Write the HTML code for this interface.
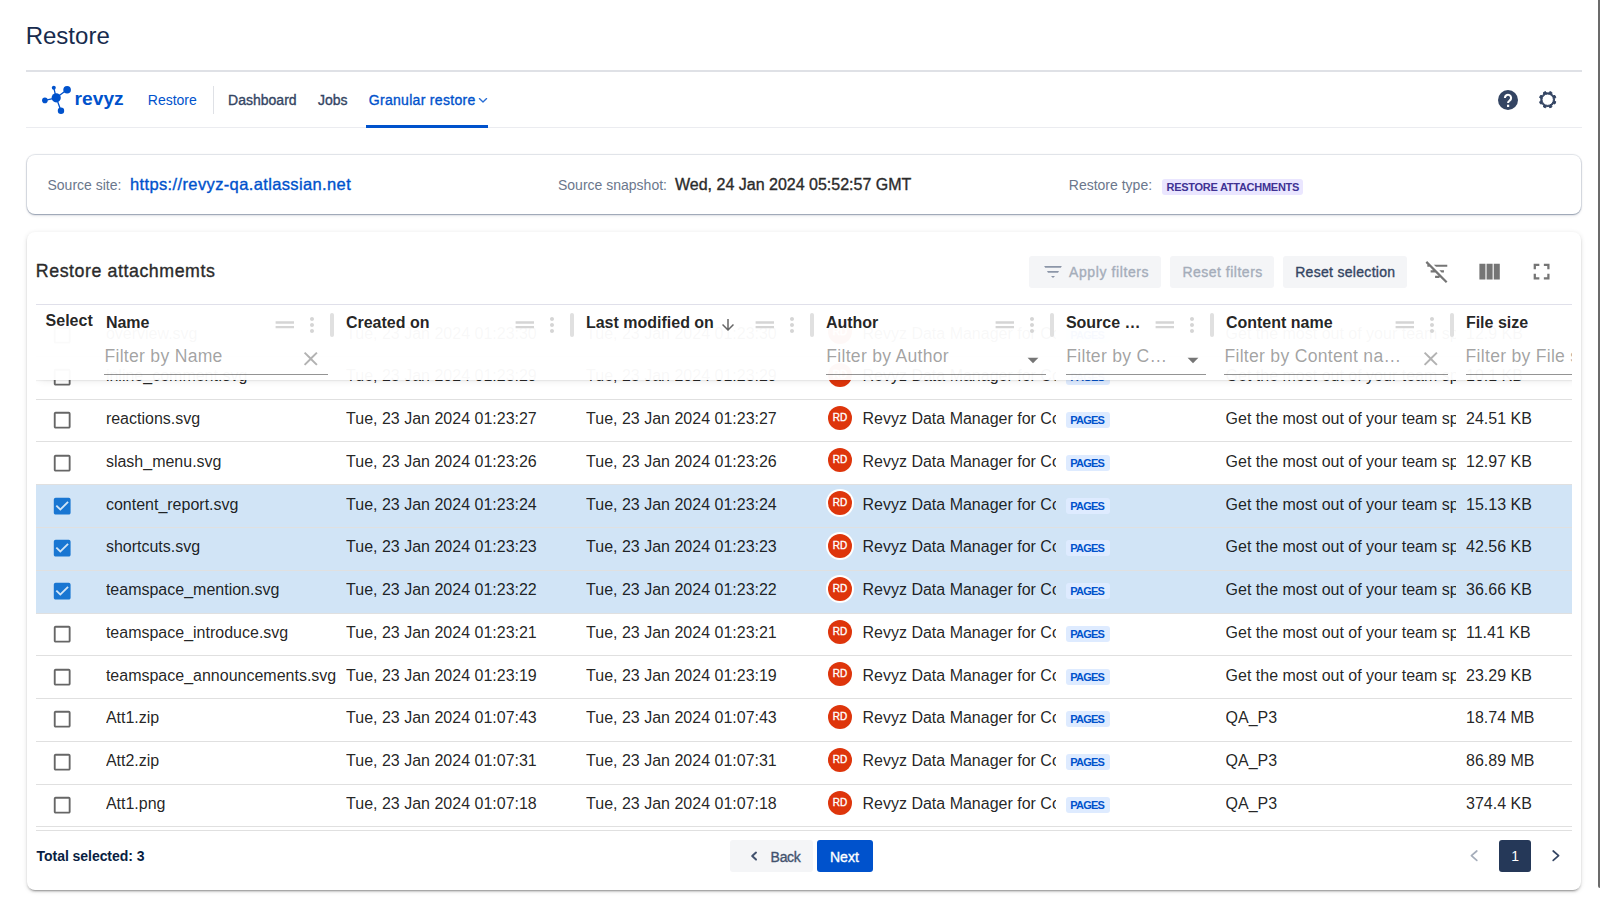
<!DOCTYPE html>
<html lang="en"><head><meta charset="utf-8"><title>Restore</title>
<style>
html,body{margin:0;padding:0;background:#fff;}
body{width:1600px;height:906px;position:relative;overflow:hidden;font-family:"Liberation Sans",sans-serif;}
.t{position:absolute;white-space:nowrap;line-height:1;}
.m{-webkit-text-stroke:0.35px currentColor;}
.abs{position:absolute;}
.card{position:absolute;background:#fff;border-radius:8px;box-shadow:0 0 1px 1px rgba(9,30,66,0.13),0 1px 1px rgba(9,30,66,0.25),0 2px 3px rgba(9,30,66,0.10);}
.card2{position:absolute;background:#fff;border-radius:8px;box-shadow:0px 3px 1px -2px rgba(0,0,0,0.2),0px 2px 2px 0px rgba(0,0,0,0.14),0px 1px 5px 0px rgba(0,0,0,0.12);}
.btn{position:absolute;height:32px;border-radius:3px;background:#F4F5F7;}
.row{position:absolute;left:0;width:1536px;box-sizing:border-box;border-bottom:1px solid #e0e0e0;}
.row.sel{background:rgba(25,118,210,0.2);}
.cell{position:absolute;white-space:nowrap;overflow:hidden;font-size:16px;line-height:1;color:rgba(0,0,0,0.87);height:24px;}
.av{position:absolute;width:24px;height:24px;border-radius:50%;background:#DE350B;box-shadow:0 0 0 2px #fff;color:#fff;font-size:10px;letter-spacing:0.2px;text-indent:0.2px;line-height:24px;text-align:center;font-weight:400;-webkit-text-stroke:0.35px #fff;}
.loz{position:absolute;height:16px;border-radius:3px;font-size:11px;font-weight:700;line-height:16px;white-space:nowrap;}
.hd{position:absolute;font-size:16px;font-weight:700;color:rgba(0,0,0,0.87);white-space:nowrap;line-height:1;}
.ph{position:absolute;font-size:17.6px;letter-spacing:0.27px;color:rgba(0,0,0,0.87);opacity:0.42;white-space:nowrap;line-height:1;overflow:hidden;}
.ul{position:absolute;height:1px;background:rgba(0,0,0,0.42);}
.rz{position:absolute;width:4px;height:24px;border-radius:2px;background:#e0e0e0;top:8px;}
</style></head><body>

<span class="t" style="left:25.70px;top:23.88px;font-size:24px;font-weight:400;color:#172B4D;">Restore</span>
<div class="abs" style="left:26px;top:70px;width:1556px;height:2px;background:#DFE1E6"></div>
<div class="abs" style="left:26px;top:127px;width:1556px;height:1px;background:#EBECF0"></div>
<svg class="abs" style="left:40px;top:84px" width="34" height="32" viewBox="40 84 34 32">
<g stroke="#0052CC" stroke-width="1.3" fill="none"><path d="M56.2 97.8L67.1 89.7M56.2 97.8L44.9 100.4M56.2 97.8L61 110.8M56.2 97.8L53.8 87.8"/></g>
<g fill="#0052CC"><circle cx="56.2" cy="97.8" r="4.6"/><circle cx="67.1" cy="89.7" r="3.8"/><circle cx="44.9" cy="100.4" r="2.8"/><circle cx="61" cy="110.8" r="3.2"/><circle cx="53.8" cy="87.8" r="2"/></g></svg>
<span class="t" style="left:74.60px;top:88.95px;font-size:19.2px;font-weight:700;color:#0052CC;">revyz</span>
<span class="t" style="left:147.80px;top:92.85px;font-size:14px;font-weight:400;color:#0052CC;">Restore</span>
<div class="abs" style="left:213px;top:86px;width:1px;height:28px;background:#DFE1E6"></div>
<span class="t m" style="left:228.10px;top:92.85px;font-size:14px;font-weight:400;color:#344563;">Dashboard</span>
<span class="t m" style="left:318.00px;top:92.85px;font-size:14px;font-weight:400;color:#344563;">Jobs</span>
<span class="t m" style="left:368.80px;top:92.85px;font-size:14px;font-weight:400;color:#0052CC;letter-spacing:0.3px;">Granular restore</span>
<svg class="abs" style="left:478px;top:95px" width="10" height="10" viewBox="0 0 10 10"><path d="M1.4 3.6L5 7L8.6 3.6" stroke="#0052CC" stroke-width="1.35" fill="none" stroke-linecap="round" stroke-linejoin="round" opacity="0.85"/></svg>
<div class="abs" style="left:366px;top:125px;width:122px;height:3px;background:#0052CC"></div>
<svg class="abs" style="left:1498px;top:90px" width="20" height="20" viewBox="0 0 20 20"><circle cx="10" cy="10" r="10" fill="#344563"/>
<path d="M6.9 7.9a3.1 3.1 0 1 1 4.8 2.6c-1 .7-1.6 1.2-1.6 2.6" fill="none" stroke="#fff" stroke-width="2.1" stroke-linecap="butt"/><rect x="9" y="14.7" width="2.2" height="2.3" fill="#fff"/></svg>
<svg class="abs" style="left:1536px;top:88px" width="24" height="24" viewBox="0 0 24 24"><path fill="#344563" fill-rule="evenodd" stroke="#344563" stroke-width="1" stroke-linejoin="round" d="M12.78 4.88 L13.85 3.58 L15.92 4.44 L15.76 6.12 L17.28 7.64 L18.96 7.48 L19.82 9.55 L18.52 10.62 L18.52 12.78 L19.82 13.85 L18.96 15.92 L17.28 15.76 L15.76 17.28 L15.92 18.96 L13.85 19.82 L12.78 18.52 L10.62 18.52 L9.55 19.82 L7.48 18.96 L7.64 17.28 L6.12 15.76 L4.44 15.92 L3.58 13.85 L4.88 12.78 L4.88 10.62 L3.58 9.55 L4.44 7.48 L6.12 7.64 L7.64 6.12 L7.48 4.44 L9.55 3.58 L10.62 4.88Z M17.40 11.70 A5.7 5.7 0 1 0 6.00 11.70 A5.7 5.7 0 1 0 17.40 11.70Z"/></svg>
<div class="card" style="left:27px;top:155px;width:1554px;height:59px"></div>
<span class="t" style="left:47.50px;top:178.15px;font-size:14px;font-weight:400;color:#6B778C;">Source site:</span>
<span class="t m" style="left:130.00px;top:176.33px;font-size:16.5px;font-weight:400;color:#0052CC;letter-spacing:0.37px;">https://revyz-qa.atlassian.net</span>
<span class="t" style="left:558.00px;top:178.15px;font-size:14px;font-weight:400;color:#6B778C;">Source snapshot:</span>
<span class="t m" style="left:675.00px;top:176.76px;font-size:16px;font-weight:400;color:#2b2b2b;">Wed, 24 Jan 2024 05:52:57 GMT</span>
<span class="t" style="left:1068.80px;top:178.15px;font-size:14px;font-weight:400;color:#6B778C;">Restore type:</span>
<div class="loz" style="left:1162px;top:179px;width:141px;background:#EAE6FF;color:#403294;"><span style="position:absolute;left:4.5px;top:0;letter-spacing:-0.27px">RESTORE ATTACHMENTS</span></div>
<div class="card2" style="left:27px;top:232px;width:1554px;height:658px"></div>
<span class="t m" style="left:35.80px;top:262.93px;font-size:17.8px;font-weight:400;color:#2b2b2b;letter-spacing:0.56px;">Restore attachmemts</span>
<div class="btn" style="left:1029px;top:256px;width:132px"></div>
<svg class="abs" style="left:1043px;top:264px" width="20" height="16" viewBox="1043 264 20 16"><g fill="#8C96A8"><path d="M1044.2 266h17.6l-1 1.8h-15.6z"/><path d="M1047 271h12l-1 1.8h-10z"/><path d="M1051 276h4l-2 1.9z"/></g></svg>
<span class="t m" style="left:1069.00px;top:265.15px;font-size:14px;font-weight:400;color:#A5ADBA;letter-spacing:0.6px;">Apply filters</span>
<div class="btn" style="left:1170px;top:256px;width:104px"></div>
<span class="t m" style="left:1182.40px;top:265.15px;font-size:14px;font-weight:400;color:#A5ADBA;letter-spacing:0.5px;">Reset filters</span>
<div class="btn" style="left:1283px;top:256px;width:124px"></div>
<span class="t m" style="left:1295.20px;top:265.15px;font-size:14px;font-weight:400;color:#344563;letter-spacing:0.3px;">Reset selection</span>
<svg style="position:absolute;left:1424.40px;top:258.10px;" width="26.6" height="26.6" viewBox="0 0 24 24"><path fill="#757575" d="M10.83 8H21V6H8.83l2 2zm5 5H18v-2h-4.17l2 2zM14 16.83V18h-4v-2h3.17l-3-3H6v-2h2.17l-3-3H3V6h.17L1.39 4.22 2.8 2.81l18.38 18.38-1.41 1.41L14 16.83z"/></svg>
<svg style="position:absolute;left:1475.90px;top:258.00px;" width="27.2" height="27.2" viewBox="0 0 24 24"><path fill="#757575" d="M14.67 5v14H9.33V5h5.34zm1 14H21V5h-5.33v14zm-7.34 0V5H3v14h5.33z"/></svg>
<svg style="position:absolute;left:1528.10px;top:258.00px;" width="27.2" height="27.2" viewBox="0 0 24 24"><path fill="#757575" d="M7 14H5v5h5v-2H7v-3zm-2-4h2V7h3V5H5v5zm12 7h-3v2h5v-5h-2v3zM14 5v2h3v3h2V5h-5z"/></svg>
<div class="abs" style="left:36px;top:304px;width:1536px;height:527px;overflow:hidden">
<div class="row" style="top:10px;height:43px">
<svg style="position:absolute;left:15.10px;top:10.20px;" width="22.4" height="22.4" viewBox="0 0 24 24"><path fill="rgba(0,0,0,0.6)" d="M19 5v14H5V5h14m0-2H5c-1.1 0-2 .9-2 2v14c0 1.1.9 2 2 2h14c1.1 0 2-.9 2-2V5c0-1.1-.9-2-2-2z"/></svg>
<div class="cell" style="left:69.9px;top:8.96px;width:230.1px;padding-top:3px">overview.svg</div>
<div class="cell" style="left:310.1px;top:8.96px;width:229.4px;padding-top:3px">Tue, 23 Jan 2024 01:23:30</div>
<div class="cell" style="left:550.1px;top:8.96px;width:229.4px;padding-top:3px">Tue, 23 Jan 2024 01:23:30</div>
<div class="av" style="left:792px;top:6px"><span>RD</span></div>
<div class="cell" style="left:826.5px;top:8.96px;width:193.5px;padding-top:3px">Revyz Data Manager for Confluence</div>
<div class="loz" style="left:1030px;top:13px;width:44px;background:#DEEBFF;color:#0052CC"><span style="position:absolute;left:4.3px;top:0;letter-spacing:-0.8px">PAGES</span></div>
<div class="cell" style="left:1189.6px;top:8.96px;width:230.4px;padding-top:3px">Get the most out of your team space</div>
<div class="cell" style="left:1430.0px;top:8.96px;width:105.0px;padding-top:3px">12.9 KB</div>
</div>
<div class="row" style="top:53px;height:43px">
<svg style="position:absolute;left:15.10px;top:9.20px;" width="22.4" height="22.4" viewBox="0 0 24 24"><path fill="rgba(0,0,0,0.6)" d="M19 5v14H5V5h14m0-2H5c-1.1 0-2 .9-2 2v14c0 1.1.9 2 2 2h14c1.1 0 2-.9 2-2V5c0-1.1-.9-2-2-2z"/></svg>
<div class="cell" style="left:69.9px;top:7.96px;width:230.1px;padding-top:3px">inline_comment.svg</div>
<div class="cell" style="left:310.1px;top:7.96px;width:229.4px;padding-top:3px">Tue, 23 Jan 2024 01:23:29</div>
<div class="cell" style="left:550.1px;top:7.96px;width:229.4px;padding-top:3px">Tue, 23 Jan 2024 01:23:29</div>
<div class="av" style="left:792px;top:6px"><span>RD</span></div>
<div class="cell" style="left:826.5px;top:7.96px;width:193.5px;padding-top:3px">Revyz Data Manager for Confluence</div>
<div class="loz" style="left:1030px;top:12px;width:44px;background:#DEEBFF;color:#0052CC"><span style="position:absolute;left:4.3px;top:0;letter-spacing:-0.8px">PAGES</span></div>
<div class="cell" style="left:1189.6px;top:7.96px;width:230.4px;padding-top:3px">Get the most out of your team space</div>
<div class="cell" style="left:1430.0px;top:7.96px;width:105.0px;padding-top:3px">10.1 KB</div>
</div>
<div class="row" style="top:96px;height:42px">
<svg style="position:absolute;left:15.10px;top:9.20px;" width="22.4" height="22.4" viewBox="0 0 24 24"><path fill="rgba(0,0,0,0.6)" d="M19 5v14H5V5h14m0-2H5c-1.1 0-2 .9-2 2v14c0 1.1.9 2 2 2h14c1.1 0 2-.9 2-2V5c0-1.1-.9-2-2-2z"/></svg>
<div class="cell" style="left:69.9px;top:7.96px;width:230.1px;padding-top:3px">reactions.svg</div>
<div class="cell" style="left:310.1px;top:7.96px;width:229.4px;padding-top:3px">Tue, 23 Jan 2024 01:23:27</div>
<div class="cell" style="left:550.1px;top:7.96px;width:229.4px;padding-top:3px">Tue, 23 Jan 2024 01:23:27</div>
<div class="av" style="left:792px;top:6px"><span>RD</span></div>
<div class="cell" style="left:826.5px;top:7.96px;width:193.5px;padding-top:3px">Revyz Data Manager for Confluence</div>
<div class="loz" style="left:1030px;top:12px;width:44px;background:#DEEBFF;color:#0052CC"><span style="position:absolute;left:4.3px;top:0;letter-spacing:-0.8px">PAGES</span></div>
<div class="cell" style="left:1189.6px;top:7.96px;width:230.4px;padding-top:3px">Get the most out of your team space</div>
<div class="cell" style="left:1430.0px;top:7.96px;width:105.0px;padding-top:3px">24.51 KB</div>
</div>
<div class="row" style="top:138px;height:43px">
<svg style="position:absolute;left:15.10px;top:10.20px;" width="22.4" height="22.4" viewBox="0 0 24 24"><path fill="rgba(0,0,0,0.6)" d="M19 5v14H5V5h14m0-2H5c-1.1 0-2 .9-2 2v14c0 1.1.9 2 2 2h14c1.1 0 2-.9 2-2V5c0-1.1-.9-2-2-2z"/></svg>
<div class="cell" style="left:69.9px;top:8.96px;width:230.1px;padding-top:3px">slash_menu.svg</div>
<div class="cell" style="left:310.1px;top:8.96px;width:229.4px;padding-top:3px">Tue, 23 Jan 2024 01:23:26</div>
<div class="cell" style="left:550.1px;top:8.96px;width:229.4px;padding-top:3px">Tue, 23 Jan 2024 01:23:26</div>
<div class="av" style="left:792px;top:6px"><span>RD</span></div>
<div class="cell" style="left:826.5px;top:8.96px;width:193.5px;padding-top:3px">Revyz Data Manager for Confluence</div>
<div class="loz" style="left:1030px;top:13px;width:44px;background:#DEEBFF;color:#0052CC"><span style="position:absolute;left:4.3px;top:0;letter-spacing:-0.8px">PAGES</span></div>
<div class="cell" style="left:1189.6px;top:8.96px;width:230.4px;padding-top:3px">Get the most out of your team space</div>
<div class="cell" style="left:1430.0px;top:8.96px;width:105.0px;padding-top:3px">12.97 KB</div>
</div>
<div class="row sel" style="top:181px;height:43px">
<svg style="position:absolute;left:15.10px;top:10.20px;" width="22.4" height="22.4" viewBox="0 0 24 24"><path fill="#1976d2" d="M19 3H5c-1.11 0-2 .9-2 2v14c0 1.1.89 2 2 2h14c1.11 0 2-.9 2-2V5c0-1.1-.89-2-2-2zm-9 14l-5-5 1.41-1.41L10 14.17l7.59-7.59L19 8l-9 9z"/></svg>
<div class="cell" style="left:69.9px;top:8.96px;width:230.1px;padding-top:3px">content_report.svg</div>
<div class="cell" style="left:310.1px;top:8.96px;width:229.4px;padding-top:3px">Tue, 23 Jan 2024 01:23:24</div>
<div class="cell" style="left:550.1px;top:8.96px;width:229.4px;padding-top:3px">Tue, 23 Jan 2024 01:23:24</div>
<div class="av" style="left:792px;top:6px"><span>RD</span></div>
<div class="cell" style="left:826.5px;top:8.96px;width:193.5px;padding-top:3px">Revyz Data Manager for Confluence</div>
<div class="loz" style="left:1030px;top:13px;width:44px;background:#DEEBFF;color:#0052CC"><span style="position:absolute;left:4.3px;top:0;letter-spacing:-0.8px">PAGES</span></div>
<div class="cell" style="left:1189.6px;top:8.96px;width:230.4px;padding-top:3px">Get the most out of your team space</div>
<div class="cell" style="left:1430.0px;top:8.96px;width:105.0px;padding-top:3px">15.13 KB</div>
</div>
<div class="row sel" style="top:224px;height:43px">
<svg style="position:absolute;left:15.10px;top:9.20px;" width="22.4" height="22.4" viewBox="0 0 24 24"><path fill="#1976d2" d="M19 3H5c-1.11 0-2 .9-2 2v14c0 1.1.89 2 2 2h14c1.11 0 2-.9 2-2V5c0-1.1-.89-2-2-2zm-9 14l-5-5 1.41-1.41L10 14.17l7.59-7.59L19 8l-9 9z"/></svg>
<div class="cell" style="left:69.9px;top:7.96px;width:230.1px;padding-top:3px">shortcuts.svg</div>
<div class="cell" style="left:310.1px;top:7.96px;width:229.4px;padding-top:3px">Tue, 23 Jan 2024 01:23:23</div>
<div class="cell" style="left:550.1px;top:7.96px;width:229.4px;padding-top:3px">Tue, 23 Jan 2024 01:23:23</div>
<div class="av" style="left:792px;top:6px"><span>RD</span></div>
<div class="cell" style="left:826.5px;top:7.96px;width:193.5px;padding-top:3px">Revyz Data Manager for Confluence</div>
<div class="loz" style="left:1030px;top:12px;width:44px;background:#DEEBFF;color:#0052CC"><span style="position:absolute;left:4.3px;top:0;letter-spacing:-0.8px">PAGES</span></div>
<div class="cell" style="left:1189.6px;top:7.96px;width:230.4px;padding-top:3px">Get the most out of your team space</div>
<div class="cell" style="left:1430.0px;top:7.96px;width:105.0px;padding-top:3px">42.56 KB</div>
</div>
<div class="row sel" style="top:267px;height:43px">
<svg style="position:absolute;left:15.10px;top:9.20px;" width="22.4" height="22.4" viewBox="0 0 24 24"><path fill="#1976d2" d="M19 3H5c-1.11 0-2 .9-2 2v14c0 1.1.89 2 2 2h14c1.11 0 2-.9 2-2V5c0-1.1-.89-2-2-2zm-9 14l-5-5 1.41-1.41L10 14.17l7.59-7.59L19 8l-9 9z"/></svg>
<div class="cell" style="left:69.9px;top:7.96px;width:230.1px;padding-top:3px">teamspace_mention.svg</div>
<div class="cell" style="left:310.1px;top:7.96px;width:229.4px;padding-top:3px">Tue, 23 Jan 2024 01:23:22</div>
<div class="cell" style="left:550.1px;top:7.96px;width:229.4px;padding-top:3px">Tue, 23 Jan 2024 01:23:22</div>
<div class="av" style="left:792px;top:6px"><span>RD</span></div>
<div class="cell" style="left:826.5px;top:7.96px;width:193.5px;padding-top:3px">Revyz Data Manager for Confluence</div>
<div class="loz" style="left:1030px;top:12px;width:44px;background:#DEEBFF;color:#0052CC"><span style="position:absolute;left:4.3px;top:0;letter-spacing:-0.8px">PAGES</span></div>
<div class="cell" style="left:1189.6px;top:7.96px;width:230.4px;padding-top:3px">Get the most out of your team space</div>
<div class="cell" style="left:1430.0px;top:7.96px;width:105.0px;padding-top:3px">36.66 KB</div>
</div>
<div class="row" style="top:310px;height:42px">
<svg style="position:absolute;left:15.10px;top:9.20px;" width="22.4" height="22.4" viewBox="0 0 24 24"><path fill="rgba(0,0,0,0.6)" d="M19 5v14H5V5h14m0-2H5c-1.1 0-2 .9-2 2v14c0 1.1.9 2 2 2h14c1.1 0 2-.9 2-2V5c0-1.1-.9-2-2-2z"/></svg>
<div class="cell" style="left:69.9px;top:7.96px;width:230.1px;padding-top:3px">teamspace_introduce.svg</div>
<div class="cell" style="left:310.1px;top:7.96px;width:229.4px;padding-top:3px">Tue, 23 Jan 2024 01:23:21</div>
<div class="cell" style="left:550.1px;top:7.96px;width:229.4px;padding-top:3px">Tue, 23 Jan 2024 01:23:21</div>
<div class="av" style="left:792px;top:6px"><span>RD</span></div>
<div class="cell" style="left:826.5px;top:7.96px;width:193.5px;padding-top:3px">Revyz Data Manager for Confluence</div>
<div class="loz" style="left:1030px;top:12px;width:44px;background:#DEEBFF;color:#0052CC"><span style="position:absolute;left:4.3px;top:0;letter-spacing:-0.8px">PAGES</span></div>
<div class="cell" style="left:1189.6px;top:7.96px;width:230.4px;padding-top:3px">Get the most out of your team space</div>
<div class="cell" style="left:1430.0px;top:7.96px;width:105.0px;padding-top:3px">11.41 KB</div>
</div>
<div class="row" style="top:352px;height:43px">
<svg style="position:absolute;left:15.10px;top:10.20px;" width="22.4" height="22.4" viewBox="0 0 24 24"><path fill="rgba(0,0,0,0.6)" d="M19 5v14H5V5h14m0-2H5c-1.1 0-2 .9-2 2v14c0 1.1.9 2 2 2h14c1.1 0 2-.9 2-2V5c0-1.1-.9-2-2-2z"/></svg>
<div class="cell" style="left:69.9px;top:8.96px;width:230.1px;padding-top:3px">teamspace_announcements.svg</div>
<div class="cell" style="left:310.1px;top:8.96px;width:229.4px;padding-top:3px">Tue, 23 Jan 2024 01:23:19</div>
<div class="cell" style="left:550.1px;top:8.96px;width:229.4px;padding-top:3px">Tue, 23 Jan 2024 01:23:19</div>
<div class="av" style="left:792px;top:6px"><span>RD</span></div>
<div class="cell" style="left:826.5px;top:8.96px;width:193.5px;padding-top:3px">Revyz Data Manager for Confluence</div>
<div class="loz" style="left:1030px;top:13px;width:44px;background:#DEEBFF;color:#0052CC"><span style="position:absolute;left:4.3px;top:0;letter-spacing:-0.8px">PAGES</span></div>
<div class="cell" style="left:1189.6px;top:8.96px;width:230.4px;padding-top:3px">Get the most out of your team space</div>
<div class="cell" style="left:1430.0px;top:8.96px;width:105.0px;padding-top:3px">23.29 KB</div>
</div>
<div class="row" style="top:395px;height:43px">
<svg style="position:absolute;left:15.10px;top:9.20px;" width="22.4" height="22.4" viewBox="0 0 24 24"><path fill="rgba(0,0,0,0.6)" d="M19 5v14H5V5h14m0-2H5c-1.1 0-2 .9-2 2v14c0 1.1.9 2 2 2h14c1.1 0 2-.9 2-2V5c0-1.1-.9-2-2-2z"/></svg>
<div class="cell" style="left:69.9px;top:7.96px;width:230.1px;padding-top:3px">Att1.zip</div>
<div class="cell" style="left:310.1px;top:7.96px;width:229.4px;padding-top:3px">Tue, 23 Jan 2024 01:07:43</div>
<div class="cell" style="left:550.1px;top:7.96px;width:229.4px;padding-top:3px">Tue, 23 Jan 2024 01:07:43</div>
<div class="av" style="left:792px;top:6px"><span>RD</span></div>
<div class="cell" style="left:826.5px;top:7.96px;width:193.5px;padding-top:3px">Revyz Data Manager for Confluence</div>
<div class="loz" style="left:1030px;top:12px;width:44px;background:#DEEBFF;color:#0052CC"><span style="position:absolute;left:4.3px;top:0;letter-spacing:-0.8px">PAGES</span></div>
<div class="cell" style="left:1189.6px;top:7.96px;width:230.4px;padding-top:3px">QA_P3</div>
<div class="cell" style="left:1430.0px;top:7.96px;width:105.0px;padding-top:3px">18.74 MB</div>
</div>
<div class="row" style="top:438px;height:43px">
<svg style="position:absolute;left:15.10px;top:9.20px;" width="22.4" height="22.4" viewBox="0 0 24 24"><path fill="rgba(0,0,0,0.6)" d="M19 5v14H5V5h14m0-2H5c-1.1 0-2 .9-2 2v14c0 1.1.9 2 2 2h14c1.1 0 2-.9 2-2V5c0-1.1-.9-2-2-2z"/></svg>
<div class="cell" style="left:69.9px;top:7.96px;width:230.1px;padding-top:3px">Att2.zip</div>
<div class="cell" style="left:310.1px;top:7.96px;width:229.4px;padding-top:3px">Tue, 23 Jan 2024 01:07:31</div>
<div class="cell" style="left:550.1px;top:7.96px;width:229.4px;padding-top:3px">Tue, 23 Jan 2024 01:07:31</div>
<div class="av" style="left:792px;top:6px"><span>RD</span></div>
<div class="cell" style="left:826.5px;top:7.96px;width:193.5px;padding-top:3px">Revyz Data Manager for Confluence</div>
<div class="loz" style="left:1030px;top:12px;width:44px;background:#DEEBFF;color:#0052CC"><span style="position:absolute;left:4.3px;top:0;letter-spacing:-0.8px">PAGES</span></div>
<div class="cell" style="left:1189.6px;top:7.96px;width:230.4px;padding-top:3px">QA_P3</div>
<div class="cell" style="left:1430.0px;top:7.96px;width:105.0px;padding-top:3px">86.89 MB</div>
</div>
<div class="row" style="top:481px;height:42px">
<svg style="position:absolute;left:15.10px;top:9.20px;" width="22.4" height="22.4" viewBox="0 0 24 24"><path fill="rgba(0,0,0,0.6)" d="M19 5v14H5V5h14m0-2H5c-1.1 0-2 .9-2 2v14c0 1.1.9 2 2 2h14c1.1 0 2-.9 2-2V5c0-1.1-.9-2-2-2z"/></svg>
<div class="cell" style="left:69.9px;top:7.96px;width:230.1px;padding-top:3px">Att1.png</div>
<div class="cell" style="left:310.1px;top:7.96px;width:229.4px;padding-top:3px">Tue, 23 Jan 2024 01:07:18</div>
<div class="cell" style="left:550.1px;top:7.96px;width:229.4px;padding-top:3px">Tue, 23 Jan 2024 01:07:18</div>
<div class="av" style="left:792px;top:6px"><span>RD</span></div>
<div class="cell" style="left:826.5px;top:7.96px;width:193.5px;padding-top:3px">Revyz Data Manager for Confluence</div>
<div class="loz" style="left:1030px;top:12px;width:44px;background:#DEEBFF;color:#0052CC"><span style="position:absolute;left:4.3px;top:0;letter-spacing:-0.8px">PAGES</span></div>
<div class="cell" style="left:1189.6px;top:7.96px;width:230.4px;padding-top:3px">QA_P3</div>
<div class="cell" style="left:1430.0px;top:7.96px;width:105.0px;padding-top:3px">374.4 KB</div>
</div>
<div class="abs" style="left:0;top:0;width:1536px;height:76px;box-sizing:border-box;border-top:1px solid #E0E0EA;background:rgba(255,255,255,0.97);box-shadow:4px 0 8px rgba(0,0,0,0.1),0 1px 1px rgba(0,0,0,0.05)">
<span class="hd" style="left:9.6px;top:7.86px">Select</span>
<span class="hd" style="left:69.9px;top:9.66px">Name</span>
<svg style="position:absolute;left:234.60px;top:5.80px;" width="27.6" height="27.6" viewBox="0 0 24 24"><path fill="#d5d5d5" d="M20 9H4v2h16V9zM4 15h16v-2H4v2z"/></svg>
<svg style="position:absolute;left:264.20px;top:7.50px;" width="24" height="24" viewBox="0 0 24 24"><path fill="#d5d5d5" d="M12 8c1.1 0 2-.9 2-2s-.9-2-2-2-2 .9-2 2 .9 2 2 2zm0 2c-1.1 0-2 .9-2 2s.9 2 2 2 2-.9 2-2-.9-2-2-2zm0 6c-1.1 0-2 .9-2 2s.9 2 2 2 2-.9 2-2-.9-2-2-2z"/></svg>
<div class="rz" style="left:294px"></div>
<span class="ph" style="left:68.5px;top:40.10px;padding-top:3px;height:22px;width:195px">Filter by Name</span>
<div class="ul" style="left:68px;top:69px;width:224px"></div>
<svg style="position:absolute;left:263.45px;top:42.25px;" width="23.5" height="23.5" viewBox="0 0 24 24"><path fill="rgba(0,0,0,0.3)" d="M19 6.41 17.59 5 12 10.59 6.41 5 5 6.41 10.59 12 5 17.59 6.41 19 12 13.41 17.59 19 19 17.59 13.41 12z"/></svg>
<span class="hd" style="left:309.9px;top:9.66px">Created on</span>
<svg style="position:absolute;left:474.60px;top:5.80px;" width="27.6" height="27.6" viewBox="0 0 24 24"><path fill="#d5d5d5" d="M20 9H4v2h16V9zM4 15h16v-2H4v2z"/></svg>
<svg style="position:absolute;left:504.20px;top:7.50px;" width="24" height="24" viewBox="0 0 24 24"><path fill="#d5d5d5" d="M12 8c1.1 0 2-.9 2-2s-.9-2-2-2-2 .9-2 2 .9 2 2 2zm0 2c-1.1 0-2 .9-2 2s.9 2 2 2 2-.9 2-2-.9-2-2-2zm0 6c-1.1 0-2 .9-2 2s.9 2 2 2 2-.9 2-2-.9-2-2-2z"/></svg>
<div class="rz" style="left:534px"></div>
<span class="hd" style="left:549.9px;top:9.66px">Last modified on</span>
<svg style="position:absolute;left:714.60px;top:5.80px;" width="27.6" height="27.6" viewBox="0 0 24 24"><path fill="#d5d5d5" d="M20 9H4v2h16V9zM4 15h16v-2H4v2z"/></svg>
<svg style="position:absolute;left:744.20px;top:7.50px;" width="24" height="24" viewBox="0 0 24 24"><path fill="#d5d5d5" d="M12 8c1.1 0 2-.9 2-2s-.9-2-2-2-2 .9-2 2 .9 2 2 2zm0 2c-1.1 0-2 .9-2 2s.9 2 2 2 2-.9 2-2-.9-2-2-2zm0 6c-1.1 0-2 .9-2 2s.9 2 2 2 2-.9 2-2-.9-2-2-2z"/></svg>
<div class="rz" style="left:774px"></div>
<svg style="position:absolute;left:683.00px;top:11.30px;" width="18" height="18" viewBox="0 0 24 24"><path fill="rgba(0,0,0,0.6)" d="M20 12l-1.41-1.41L13 16.17V4h-2v12.17l-5.58-5.59L4 12l8 8 8-8z"/></svg>
<span class="hd" style="left:789.9px;top:9.66px">Author</span>
<svg style="position:absolute;left:954.60px;top:5.80px;" width="27.6" height="27.6" viewBox="0 0 24 24"><path fill="#d5d5d5" d="M20 9H4v2h16V9zM4 15h16v-2H4v2z"/></svg>
<svg style="position:absolute;left:984.20px;top:7.50px;" width="24" height="24" viewBox="0 0 24 24"><path fill="#d5d5d5" d="M12 8c1.1 0 2-.9 2-2s-.9-2-2-2-2 .9-2 2 .9 2 2 2zm0 2c-1.1 0-2 .9-2 2s.9 2 2 2 2-.9 2-2-.9-2-2-2zm0 6c-1.1 0-2 .9-2 2s.9 2 2 2 2-.9 2-2-.9-2-2-2z"/></svg>
<div class="rz" style="left:1014px"></div>
<span class="ph" style="left:790.3px;top:40.10px;padding-top:3px;height:22px">Filter by Author</span>
<div class="ul" style="left:790px;top:69px;width:220px"></div>
<svg style="position:absolute;left:983.50px;top:41.50px;" width="26" height="26" viewBox="0 0 24 24"><path fill="rgba(0,0,0,0.54)" d="M7 10l5 5 5-5z"/></svg>
<span class="hd" style="left:1029.9px;top:9.66px">Source …</span>
<svg style="position:absolute;left:1114.60px;top:5.80px;" width="27.6" height="27.6" viewBox="0 0 24 24"><path fill="#d5d5d5" d="M20 9H4v2h16V9zM4 15h16v-2H4v2z"/></svg>
<svg style="position:absolute;left:1144.20px;top:7.50px;" width="24" height="24" viewBox="0 0 24 24"><path fill="#d5d5d5" d="M12 8c1.1 0 2-.9 2-2s-.9-2-2-2-2 .9-2 2 .9 2 2 2zm0 2c-1.1 0-2 .9-2 2s.9 2 2 2 2-.9 2-2-.9-2-2-2zm0 6c-1.1 0-2 .9-2 2s.9 2 2 2 2-.9 2-2-.9-2-2-2z"/></svg>
<div class="rz" style="left:1174px"></div>
<span class="ph" style="left:1030.3px;top:40.10px;padding-top:3px;height:22px">Filter by C…</span>
<div class="ul" style="left:1030px;top:69px;width:140px"></div>
<svg style="position:absolute;left:1143.50px;top:41.50px;" width="26" height="26" viewBox="0 0 24 24"><path fill="rgba(0,0,0,0.54)" d="M7 10l5 5 5-5z"/></svg>
<span class="hd" style="left:1189.9px;top:9.66px">Content name</span>
<svg style="position:absolute;left:1354.60px;top:5.80px;" width="27.6" height="27.6" viewBox="0 0 24 24"><path fill="#d5d5d5" d="M20 9H4v2h16V9zM4 15h16v-2H4v2z"/></svg>
<svg style="position:absolute;left:1384.20px;top:7.50px;" width="24" height="24" viewBox="0 0 24 24"><path fill="#d5d5d5" d="M12 8c1.1 0 2-.9 2-2s-.9-2-2-2-2 .9-2 2 .9 2 2 2zm0 2c-1.1 0-2 .9-2 2s.9 2 2 2 2-.9 2-2-.9-2-2-2zm0 6c-1.1 0-2 .9-2 2s.9 2 2 2 2-.9 2-2-.9-2-2-2z"/></svg>
<div class="rz" style="left:1414px"></div>
<span class="ph" style="left:1188.5px;top:40.10px;padding-top:3px;height:22px;width:195px">Filter by Content na…</span>
<div class="ul" style="left:1188px;top:69px;width:224px"></div>
<svg style="position:absolute;left:1383.45px;top:42.25px;" width="23.5" height="23.5" viewBox="0 0 24 24"><path fill="rgba(0,0,0,0.3)" d="M19 6.41 17.59 5 12 10.59 6.41 5 5 6.41 10.59 12 5 17.59 6.41 19 12 13.41 17.59 19 19 17.59 13.41 12z"/></svg>
<span class="hd" style="left:1429.9px;top:9.66px">File size</span>
<span class="ph" style="left:1429.6px;top:40.10px;padding-top:3px;height:22px;width:106.40000000000009px">Filter by File size</span>
<div class="ul" style="left:1430px;top:69px;width:106px"></div>
</div>
<div class="abs" style="left:0;top:526px;width:1536px;height:1px;background:#e0e0e0"></div>
</div>
<span class="t" style="left:36.60px;top:849.15px;font-size:14px;font-weight:700;color:#091E42;letter-spacing:-0.05px;">Total selected: 3</span>
<div class="btn" style="left:730px;top:840px;width:83px"></div>
<svg class="abs" style="left:748px;top:850px" width="12" height="12" viewBox="0 0 12 12"><path d="M8 2.6L4.2 6.1L8 9.6" stroke="#42526E" stroke-width="2" fill="none" stroke-linecap="round" stroke-linejoin="round"/></svg>
<span class="t m" style="left:770.60px;top:849.65px;font-size:14px;font-weight:400;color:#42526E;letter-spacing:-0.3px;">Back</span>
<div class="btn" style="left:817px;top:840px;width:56px;background:#0052CC"></div>
<span class="t m" style="left:830.00px;top:849.65px;font-size:14px;font-weight:400;color:#fff;">Next</span>
<svg class="abs" style="left:1466px;top:848px" width="16" height="16" viewBox="0 0 16 16"><path d="M10.8 3L5.4 7.7L10.8 12.4" stroke="#A5ADBA" stroke-width="1.7" fill="none" stroke-linecap="round" stroke-linejoin="round"/></svg>
<div class="abs" style="left:1499px;top:840px;width:32px;height:32px;border-radius:3px;background:#253858"></div>
<span class="t" style="left:1511.20px;top:849.45px;font-size:14px;font-weight:400;color:#fff;">1</span>
<svg class="abs" style="left:1548px;top:848px" width="16" height="16" viewBox="0 0 16 16"><path d="M5.2 3L10.6 7.7L5.2 12.4" stroke="#344563" stroke-width="1.7" fill="none" stroke-linecap="round" stroke-linejoin="round"/></svg>
<div class="abs" style="left:1598px;top:0;width:2px;height:888px;background:#6b6b6b;border-radius:0 0 0 2px"></div>
</body></html>
